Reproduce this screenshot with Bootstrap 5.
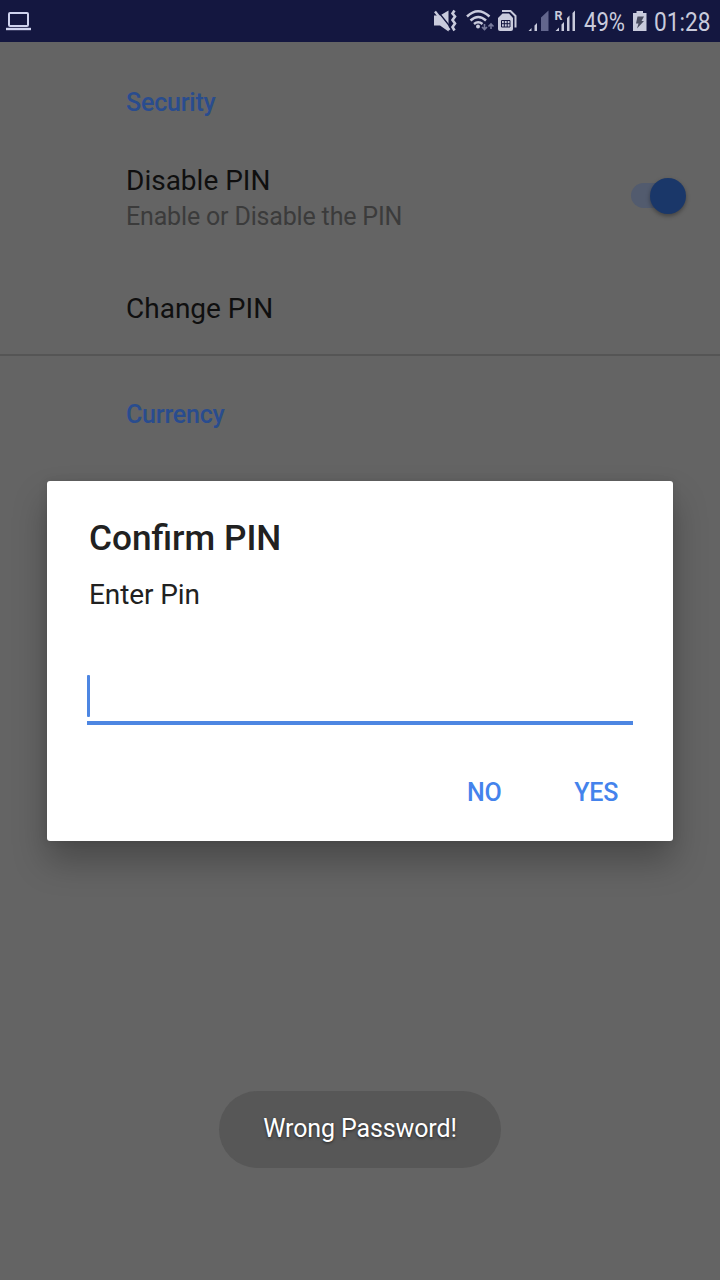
<!DOCTYPE html>
<html lang="en">
<head>
<meta charset="utf-8">
<meta name="viewport" content="width=device-width, initial-scale=1">
<title>Settings</title>
<link href="https://cdn.jsdelivr.net/npm/bootstrap@5.3.0/dist/css/bootstrap.min.css" rel="stylesheet">
<style>
  html, body { height: 100%; }
  body { font-family: Roboto, "Liberation Sans", sans-serif; background: #646464; color: #0f0f0f; overflow: hidden; }
  .screen { height: 1280px; }
  .status-bar { height: 42px; background: #141740; }
  .settings { padding-top: 43px; }
  .pref { padding-left: 126px; padding-right: 34px; }
  .pref-head { font-size: 25px; line-height: 36px; letter-spacing: -.2px; font-weight: 500; color: #294c8e; }
  .pref-title { font-size: 28px; line-height: 36px; }
  .pref-sub { font-size: 25px; line-height: 36px; letter-spacing: -.17px; color: #3b3b3b; }
  .pref-line { height: 2px; background: #555; }
  .pin-switch { width: 55px; height: 36px; margin-bottom: 7px; }
  .switch-track { width: 48px; height: 25px; background: #525b6e; }
  .switch-thumb { top: 0; right: 0; width: 36px; height: 36px; background: #1a3769; box-shadow: 0 2px 4px rgba(0,0,0,.35); }
  .pin-dialog { top: 481px; left: 47px; width: 626px; height: 359.5px; border-radius: 3px; color: #212121; padding: 36px 40px 0 42px; box-shadow: 0 20px 34px rgba(0,0,0,.27), 0 0 10px rgba(0,0,0,.1); }
  .pin-dialog h1 { font-size: 35.2px; line-height: 42px; font-weight: 500; }
  .pin-dialog p { font-size: 28px; line-height: 36px; letter-spacing: -.1px; margin-top: 18px; }
  .pin-field { height: 50px; margin: 62px 0 0 -2px; border-bottom: 4px solid #4d86e2; }
  .caret { width: 3px; height: 42px; background: #4d86e2; border-radius: 1px; }
  .pin-actions { margin-top: 50px; padding-right: 15px; gap: 73px; }
  .pin-actions .btn { font-size: 25px; line-height: 36px; letter-spacing: -.3px; font-weight: 500; color: #4483ec; }
  .pin-toast { top: 1091px; left: 219px; width: 282px; height: 77px; background: #575757; color: #fff; font-size: 25px; letter-spacing: -.12px; text-shadow: 0 1px 3px rgba(0,0,0,.6); padding-bottom: 2px; }
</style>
</head>
<body>
<div class="screen position-relative overflow-hidden">
  <header class="status-bar d-flex justify-content-between">
    <svg width="40" height="42" viewBox="0 0 40 42" fill="none" stroke="#cfd3ee" stroke-width="2">
      <rect x="9" y="13" width="19" height="13" rx="1"/>
      <path d="M6 29h25" stroke-width="2.4"/>
    </svg>
    <svg width="290" height="42" viewBox="430 0 290 42" fill="#c9cbdc" font-family="Roboto, sans-serif">
      <!-- muted, vibrating speaker -->
      <path d="M434 15.500h6l8.500-5v21l-8.500-6h-6z"/>
      <path d="M437.500 11l12.500 15.500" stroke="#141740" stroke-width="1.300"/>
      <path d="M435 11.500l14.500 18.500" stroke="#c9cbdc" stroke-width="2.400"/>
      <path d="M454.500 10.500l-2 3 2.500 3-2.500 3.500 2.500 3.500-2.500 3.500 2 3.500" fill="none" stroke="#c9cbdc" stroke-width="2.600"/>
      <!-- wifi with traffic arrows -->
      <g fill="none" stroke="#c9cbdc" stroke-width="2.500">
        <path d="M467 16.500q11-10.500 22.500 0"/>
        <path d="M470.500 20.500q7.700-7 15.500 0"/>
        <path d="M474 24q4.200-3.500 8.500 0"/>
      </g>
      <circle cx="478" cy="26.500" r="2"/>
      <path d="M484.500 24v5M482 27l2.500 2.500 2.500-2.500M491 29v-5M488.500 26.500l2.500-2.500 2.500 2.500" fill="none" stroke="#777a9b" stroke-width="1.600"/>
      <!-- dual SIM cards -->
      <path d="M502 11h8.500l5 5v11.500" fill="none" stroke="#c9cbdc" stroke-width="2"/>
      <path d="M502.500 13.500h6.500l4 4.500v11q0 2-2 2h-11q-2 0-2-2v-11z"/>
      <path d="M501.500 20.500h8.500v6.500h-8.500zM504.300 20.500v6.500M507.200 20.500v6.500M501.500 23.700h8.500" fill="none" stroke="#141740" stroke-width="1"/>
      <!-- signal, first SIM -->
      <path d="M528.500 31l3-3v3zM534.500 25.500l2.500-2.500v8h-2.500z"/>
      <path d="M541 17.500l7.500-7V31H541z" fill="#63668d"/>
      <!-- signal, second SIM, roaming -->
      <text x="554.500" y="20" font-size="13.500" font-weight="700" textLength="8" lengthAdjust="spacingAndGlyphs">R</text>
      <path d="M555.500 31l3.500-3.500v3.500zM561.500 24.500l2.500-2.500v9h-2.500zM567 18l2.500-2.500V31H567zM572.500 13l2.500-2.500V31h-2.500z"/>
      <text x="584" y="31" font-size="26" textLength="41" lengthAdjust="spacingAndGlyphs">49%</text>
      <!-- charging battery -->
      <path d="M636.500 11h6.500v2h3.500v18h-13.500V13h3.500z"/>
      <path d="M637.500 16.500h6.500l-2.500 4.500h2.500l-7 7.500 1.500-5h-2.500z" fill="#4a4d60"/>
      <text x="654" y="31" font-size="26" textLength="56.500" lengthAdjust="spacingAndGlyphs">01:28</text>
    </svg>
  </header>

  <main class="settings">
    <div class="pref pref-head">Security</div>
    <div class="pref d-flex justify-content-between align-items-center" style="margin-top:42px">
      <div>
        <div class="pref-title">Disable PIN</div>
        <div class="pref-sub">Enable or Disable the PIN</div>
      </div>
      <div class="pin-switch position-relative d-flex align-items-center">
        <div class="switch-track rounded-pill"></div>
        <div class="switch-thumb position-absolute rounded-circle"></div>
      </div>
    </div>
    <div class="pref pref-title" style="margin-top:56px">Change PIN</div>
    <div class="pref-line" style="margin-top:27px"></div>
    <div class="pref pref-head" style="margin-top:41px">Currency</div>
  </main>

  <section class="pin-dialog position-absolute bg-white" role="dialog" aria-labelledby="pinTitle">
    <h1 id="pinTitle" class="mb-0">Confirm PIN</h1>
    <p class="mb-0">Enter Pin</p>
    <div class="pin-field"><div class="caret"></div></div>
    <div class="pin-actions d-flex justify-content-end">
      <button type="button" class="btn border-0 p-0">NO</button>
      <button type="button" class="btn border-0 p-0">YES</button>
    </div>
  </section>

  <div class="pin-toast position-absolute rounded-pill d-flex align-items-center justify-content-center" role="status">Wrong Password!</div>
</div>
<script src="https://cdn.jsdelivr.net/npm/bootstrap@5.3.0/dist/js/bootstrap.bundle.min.js"></script>
</body>
</html>
